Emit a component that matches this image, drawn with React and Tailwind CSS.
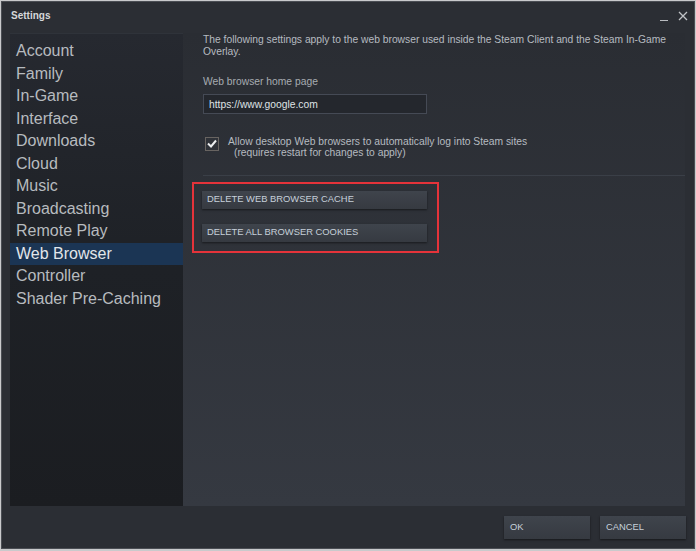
import React, { useState } from "react";

const NAV = [
  "Account",
  "Family",
  "In-Game",
  "Interface",
  "Downloads",
  "Cloud",
  "Music",
  "Broadcasting",
  "Remote Play",
  "Web Browser",
  "Controller",
  "Shader Pre-Caching",
];

function SteamButton({ children, className = "" }) {
  return (
    <button
      className={
        "flex items-center text-left text-[9.4px] uppercase text-[#c6d0da] bg-gradient-to-b from-[#3f444c] to-[#363a41] shadow-[0_1px_2px_rgba(0,0,0,0.5)] " +
        className
      }
    >
      {children}
    </button>
  );
}

export default function App() {
  const [active, setActive] = useState("Web Browser");
  const [allowLogin, setAllowLogin] = useState(true);

  return (
    <div
      className="w-[696px] h-[551px] bg-[#c9cacc] p-px"
      style={{ fontFamily: '"Liberation Sans", Arial, sans-serif' }}
    >
      <div className="w-full h-[548px] bg-[#2b2e34] flex flex-col border border-[#4b4e54]">
        {/* Title bar */}
        <div className="h-[31px] flex items-start justify-between pl-[9px] pr-[6px] pt-[6px]">
          <span className="text-[10px] font-bold text-[#d5d7da]">Settings</span>
          <div className="flex items-center gap-[10px] text-[#b9bcc0]">
            <span className="w-[8px] h-px bg-[#b9bcc0] mt-[12px]" />
            <svg width="10" height="10" viewBox="0 0 10 10" className="mt-[3px]">
              <path d="M1 1 L9 9 M9 1 L1 9" stroke="#c0c3c7" strokeWidth="1.3" />
            </svg>
          </div>
        </div>

        {/* Body */}
        <div className="flex h-[473px] pl-[8px] pr-[9px]">
          {/* Sidebar */}
          <div className="w-[173px] h-full bg-gradient-to-b from-[#262930] via-[#1e2126] to-[#1b1d21] border-t border-[#2f333a] pt-[6px]">
            {NAV.map((item) => (
              <div
                key={item}
                onClick={() => setActive(item)}
                className={
                  "h-[22.5px] flex items-center pl-[6px] text-[16px] cursor-pointer " +
                  (active === item ? "bg-[#1b3554] text-[#e2e6ea]" : "text-[#b7bbbf]")
                }
              >
                {item}
              </div>
            ))}
          </div>

          {/* Content */}
          <div className="flex-1 h-full bg-gradient-to-b from-[#2a2d33] to-[#353941] pl-[20px] pt-px">
            <p className="text-[10.3px] leading-[12px] text-[#b6bbc0]">
              The following settings apply to the web browser used inside the Steam Client and the Steam In-Game Overlay.
            </p>

            <div className="mt-[18px] text-[10.3px] leading-[12px] text-[#a7acb1]">Web browser home page</div>
            <input
              className="mt-[6px] w-[224px] h-[20px] bg-[#24272d] border border-[#454a55] px-[5px] text-[10.3px] text-[#dfe2e5] outline-none"
              defaultValue="https://www.google.com"
            />

            <div className="mt-[22px] flex items-start">
              <button
                onClick={() => setAllowLogin(!allowLogin)}
                className="ml-[2px] w-[14px] h-[14px] border border-[#686461] bg-[#2f3238] flex items-center justify-center"
              >
                {allowLogin && (
                  <svg width="10" height="9" viewBox="0 0 10 9">
                    <path d="M1 4.5 L4 7.5 L9 1.5" stroke="#eceeef" strokeWidth="2" fill="none" />
                  </svg>
                )}
              </button>
              <div className="ml-[9px] -mt-[1px] text-[10.3px] leading-[11.5px] text-[#b6bbc0]">
                <div>Allow desktop Web browsers to automatically log into Steam sites</div>
                <div className="pl-[6px]">(requires restart for changes to apply)</div>
              </div>
            </div>

            <div className="mt-[16px] h-px bg-[#3a3f47]" />

            <div className="mt-[6px] -ml-[11px] w-[247px] border-2 border-[#e5333a] pl-[8px] pt-[7px] pb-[9px] flex flex-col gap-[15px]">
              <SteamButton className="w-[225px] h-[18px] pl-[5px]">Delete web browser cache</SteamButton>
              <SteamButton className="w-[225px] h-[18px] pl-[5px]">Delete all browser cookies</SteamButton>
            </div>
          </div>
        </div>

        {/* Footer */}
        <div className="flex-1 flex justify-end items-start gap-[10px] pr-[8px] pt-[10px]">
          <SteamButton className="w-[86px] h-[23px] pl-[6px]">OK</SteamButton>
          <SteamButton className="w-[86px] h-[23px] pl-[6px]">Cancel</SteamButton>
        </div>
      </div>
    </div>
  );
}
